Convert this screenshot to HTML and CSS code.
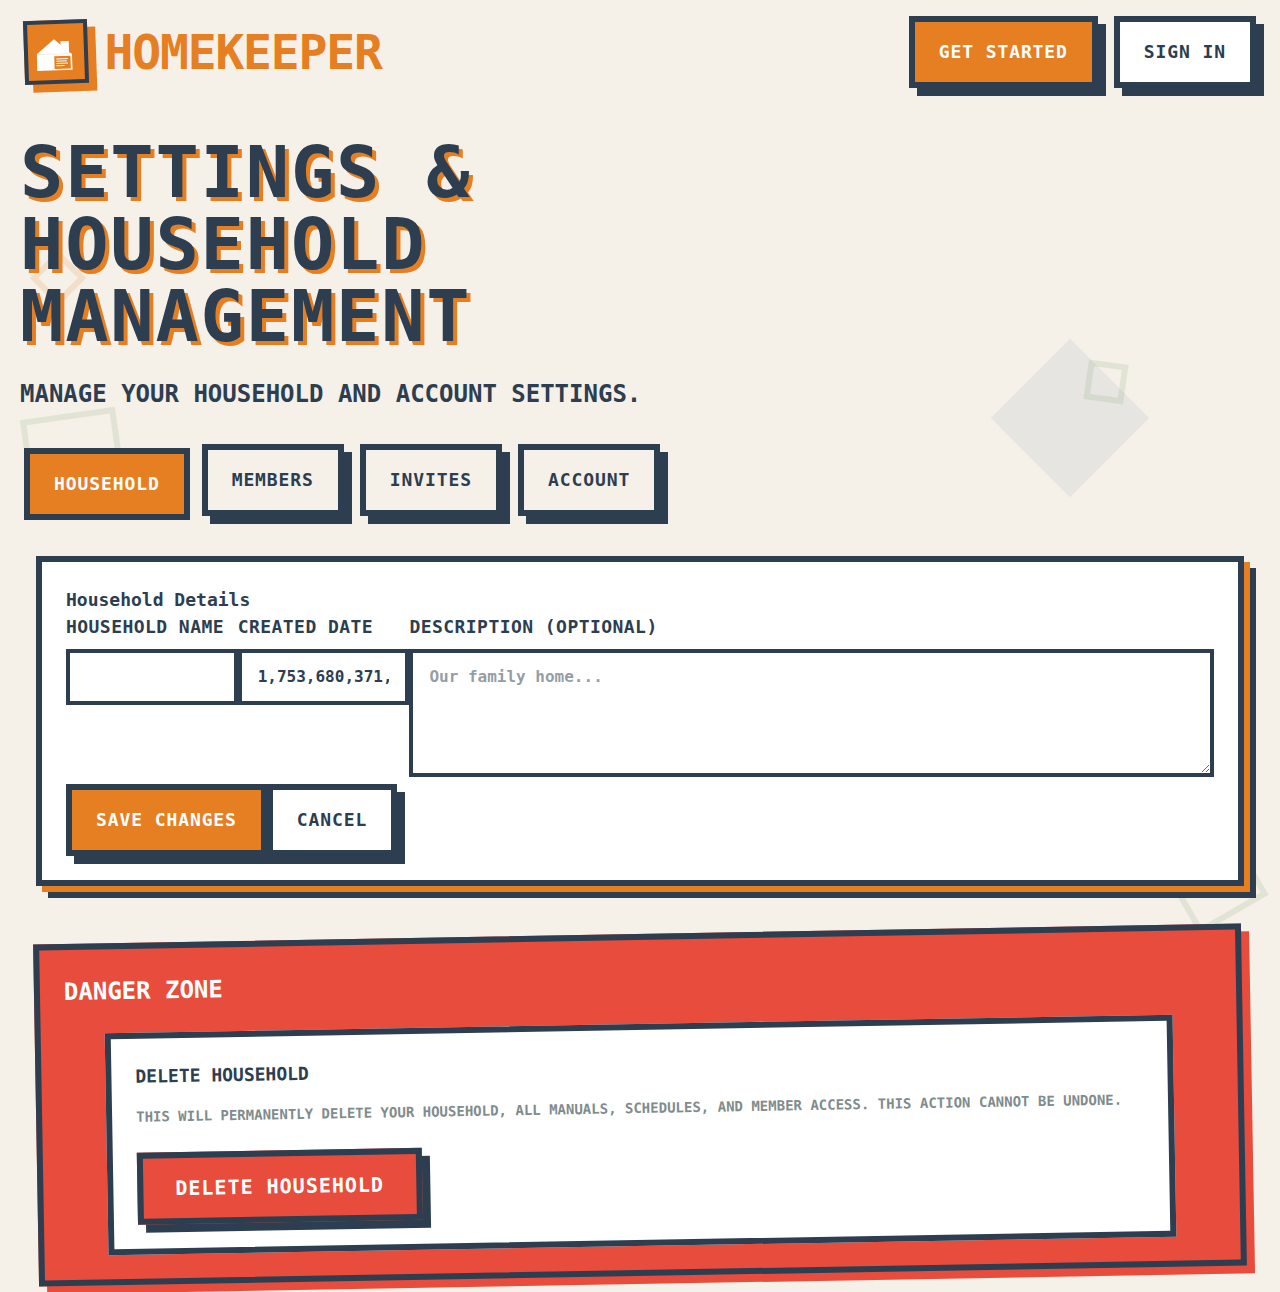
FILE: index.html
```html
<!DOCTYPE html>
<html lang="en">
<head>
<meta charset="utf-8">
<title>Homekeeper</title>
<link rel="stylesheet" href="styles.css">
</head>
<body>
<div class="page">
  <div class="shapes" aria-hidden="true">
    <div class="shape diamond"></div>
    <div class="shape outline small-orange"></div>
    <div class="shape outline small-green"></div>
    <div class="shape outline left-green"></div>
    <div class="shape outline right-green"></div>
  </div>

  <header class="header">
    <div class="brand">
      <div class="logo">
        <svg viewBox="4 4 56 56" width="56" height="56">
          <path fill="#fff" d="M12.8 33.6 30.4 19.2 36.8 25V21.4H45.1V32.6L47.9 34.2V50.3H12.6Z"/>
          <path stroke="#e67e22" stroke-width=".3" opacity=".5" d="M13 34H45"/>
          <path fill="#e67e22" d="M30.1 36.3H46.3V49H30.1Z"/>
          <path stroke="#fff" stroke-width="1" d="M32 39H43.6M32 41.2H42.6M32 43.4H43.6M32 45.8H40"/>
        </svg>
      </div>
      <span class="brand-name">HOMEKEEPER</span>
    </div>
    <nav class="actions">
      <button class="btn primary">GET STARTED</button>
      <button class="btn">SIGN IN</button>
    </nav>
  </header>

  <main class="main">
    <h1 class="title">SETTINGS &amp; HOUSEHOLD MANAGEMENT</h1>
    <p class="subtitle">MANAGE YOUR HOUSEHOLD AND ACCOUNT SETTINGS.</p>
    <div class="tabs">
      <button class="btn tab active">HOUSEHOLD</button>
      <button class="btn tab">MEMBERS</button>
      <button class="btn tab">INVITES</button>
      <button class="btn tab">ACCOUNT</button>
    </div>

    <section class="card">
      <h2 class="card-title">Household Details</h2>
      <div class="fields">
        <div class="field"><label for="name">HOUSEHOLD NAME</label><input id="name" type="text"></div>
        <div class="field"><label for="created">CREATED DATE</label><input id="created" type="text" value="1,753,680,371,"></div>
        <div class="field"><label for="desc">DESCRIPTION (OPTIONAL)</label><textarea id="desc" placeholder="Our family home..."></textarea></div>
      </div>
      <div class="form-actions">
        <button class="btn primary">SAVE CHANGES</button>
        <button class="btn">CANCEL</button>
      </div>
    </section>

    <section class="danger">
      <h2 class="danger-title">DANGER ZONE</h2>
      <div class="danger-box">
        <h3 class="danger-heading">DELETE HOUSEHOLD</h3>
        <p class="danger-text">THIS WILL PERMANENTLY DELETE YOUR HOUSEHOLD, ALL MANUALS, SCHEDULES, AND MEMBER ACCESS. THIS ACTION CANNOT BE UNDONE.</p>
        <button class="btn delete">DELETE HOUSEHOLD</button>
      </div>
    </section>
  </main>
</div>
</body>
</html>
```
FILE: styles.css
```css
:root {
  --navy: #2c3e50;
  --orange: #e67e22;
  --red: #e74c3c;
  --cream: #f5f0e8;
}

* { box-sizing: border-box; margin: 0; }

body {
  background: var(--cream);
  color: var(--navy);
  font: 700 18px/1.5 "DejaVu Sans Mono", monospace;
  overflow: hidden;
}

.page {
  position: relative;
  height: 1292px;
  overflow: hidden;
}

/* decorative background shapes */
.shape { position: absolute; }
.outline { border: 6px solid; }
.diamond {
  left: 1014px; top: 362px; width: 112px; height: 112px;
  background: #e6e5e1;
  transform: rotate(45deg);
}
.small-orange {
  left: 38px; top: 258px; width: 40px; height: 40px;
  border-color: var(--orange);
  opacity: .15;
  transform: rotate(45deg);
}
.small-green, .left-green, .right-green { border-color: #70a068; opacity: .15; }
.small-green { left: 1086px; top: 362px; width: 40px; height: 40px; transform: rotate(8deg); }
.left-green { left: 26px; top: 413px; width: 96px; height: 96px; transform: rotate(-8deg); }
.right-green { left: 1174px; top: 840px; width: 80px; height: 80px; transform: rotate(-30deg); }

.header {
  position: relative;
  display: flex;
  justify-content: space-between;
  align-items: center;
  height: 104px;
  padding: 0 24px;
}
.brand { display: flex; align-items: center; gap: 16.6px; }
.logo {
  width: 64px;
  height: 64px;
  border: 4px solid var(--navy);
  background: var(--orange);
  box-shadow: 8px 8px 0 var(--orange);
  transform: rotate(-2deg);
}
.logo svg { display: block; }
.brand-name {
  color: var(--orange);
  font-size: 48px;
  line-height: 48px;
  letter-spacing: -.025em;
}
.actions { display: flex; gap: 16px; }

.btn {
  height: 72px;
  padding: 0 24px 2px;
  border: 6px solid var(--navy);
  border-radius: 0;
  background: #fff;
  color: var(--navy);
  font: inherit;
  letter-spacing: .05em;
  white-space: nowrap;
  box-shadow: 8px 8px 0 var(--navy);
}
.primary { background: var(--orange); color: #fff; }

.main { position: relative; padding: 32px 20px 0; }
.title {
  max-width: 620px;
  font-size: 72px;
  line-height: 72px;
  letter-spacing: .025em;
  text-shadow: 4px 4px 0 var(--orange);
}
.subtitle { margin-top: 24px; font-size: 24px; line-height: 36px; }

.tabs { display: flex; gap: 16px; margin-top: 32px; }
.tab { background: var(--cream); }
.tab.active {
  background: var(--orange);
  color: #fff;
  box-shadow: none;
  transform: translate(4px, 4px);
}

.card {
  height: 330px;
  margin: 40px 16px 0;
  padding: 24px;
  border: 6px solid var(--navy);
  background: #fff;
  box-shadow: 6px 6px 0 var(--orange), 12px 12px 0 var(--navy);
}
.card-title { font-size: 18px; line-height: 27px; }
.fields { display: grid; grid-template-columns: 171.7px 171.7px 1fr; }
.field label {
  display: block;
  margin-bottom: 9px;
  letter-spacing: .025em;
  white-space: nowrap;
}
.field input, .field textarea {
  display: block;
  width: 100%;
  height: 56px;
  padding: 12px 16px;
  border: 4px solid var(--navy);
  border-radius: 0;
  background: #fff;
  color: var(--navy);
  font: inherit;
  font-size: 16px;
  line-height: 24px;
}
.field input { padding: 11px 16px 13px; }
.field textarea { height: 128px; resize: vertical; }
.field textarea::placeholder { color: var(--navy); opacity: .5; }
.form-actions { display: flex; margin-top: 7px; }

.danger {
  height: 342px;
  margin: 48px 16px 0;
  padding: 24px;
  border: 6px solid var(--navy);
  background: var(--red);
  box-shadow: 8px 8px 0 var(--red);
  transform: rotate(-1deg);
}
.danger-title { color: #fff; font-size: 24px; line-height: 36px; }
.danger-box {
  width: 1068px;
  height: 222px;
  margin: 24px auto 0;
  padding: 24px;
  border: 6px solid var(--navy);
  background: #fff;
}
.danger-heading { font-size: 18px; line-height: 27px; }
.danger-text {
  margin: 17px 0 25px;
  color: #7f8c8d;
  font-size: 14px;
  line-height: 21px;
  white-space: nowrap;
}
.delete {
  padding: 0 32px;
  background: var(--red);
  color: #fff;
  font-size: 20px;
}
```
